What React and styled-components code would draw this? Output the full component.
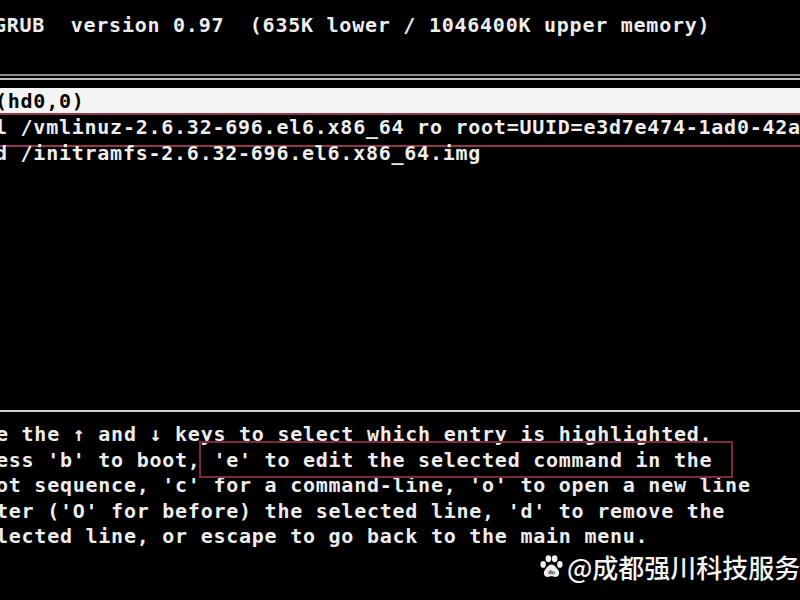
import React from 'react'
import styled, { createGlobalStyle } from 'styled-components'

const GlobalStyle = createGlobalStyle`
    html, body {
        margin: 0;
        padding: 0;
        background: #000;
        overflow: hidden;
    }
`

const Screen = styled.div`
    width: 800px;
    height: 600px;
    background: #000;
    color: #ededed;
    font-family: "DejaVu Sans Mono", "Liberation Mono", monospace;
    font-weight: bold;
    font-size: 20px;
    letter-spacing: 0.75px;
    overflow: hidden;
    display: flex;
    flex-direction: column;
    position: relative;
`

const Header = styled.div`
    padding-top: 12px;
    margin-left: -6px;
    line-height: 26px;
    height: 26px;
    white-space: pre;
`

const Rule = styled.div`
    height: 2px;
    flex-shrink: 0;
    margin-top: ${p => p.$gap}px;
    background: ${p => p.$tone};
`

const Menu = styled.div`
    margin-top: 8px;
    height: 322px;
    display: flex;
    flex-direction: column;
`

const Row = styled.div`
    position: relative;
    height: 26px;
    line-height: 26px;
    white-space: pre;
    background: ${p => (p.$selected ? '#f4f4f4' : 'transparent')};
    color: ${p => (p.$selected ? '#050505' : 'inherit')};

    span {
        display: block;
        margin-left: -5px;
    }

    ${p => p.$marked && `
        &::after {
            content: '';
            position: absolute;
            left: 0;
            right: 0;
            top: -1px;
            height: 30px;
            border-top: 2px solid #94384a;
            border-bottom: 2px solid #94384a;
            pointer-events: none;
        }
    `}
`

const Help = styled.div`
    padding-top: 10px;
    margin-left: -4px;
    line-height: 25.5px;
    white-space: pre;
`

const Mark = styled.span`
    outline: 2px solid #7c2b3b;
    padding: 5px 6px 4px 0;
`

const Watermark = styled.div`
    position: absolute;
    left: 539px;
    top: 548px;
    display: flex;
    align-items: center;
    gap: 3px;
    font-family: "Noto Sans CJK SC", "Noto Sans", sans-serif;
    font-weight: 500;
    font-size: 26px;
    letter-spacing: 0;
    color: #f2f2f2;
    text-shadow: 0 0 2px rgba(0, 0, 0, 0.8);
    white-space: nowrap;
`

function Paw() {
    return (
        <svg width="25" height="25" viewBox="0 0 24 24">
            <ellipse cx="4" cy="10" rx="2.6" ry="3.2" fill="#f0f0f0" />
            <ellipse cx="9" cy="4.5" rx="2.7" ry="3.3" fill="#f0f0f0" />
            <ellipse cx="15" cy="4.5" rx="2.7" ry="3.3" fill="#f0f0f0" />
            <ellipse cx="20" cy="10" rx="2.6" ry="3.2" fill="#f0f0f0" />
            <path d="M12 10c-3 0-4.5 3-6.5 5.5C3.8 17.6 4.5 22 8.5 22c1.5 0 2.300-.6 3.5-.6s2 .6 3.5.6c4 0 4.7-4.4 3-6.5C16.5 13 15 10 12 10z" fill="#f0f0f0" />
            <text x="12" y="19.5" textAnchor="middle" fontSize="5" fontFamily="DejaVu Sans" fill="#222">du</text>
        </svg>
    )
}

export default function App() {
    return (
        <Screen>
            <GlobalStyle />
            <Header>GRUB  version 0.97  (635K lower / 1046400K upper memory)</Header>
            <Rule $gap={36} $tone="#8c8c8c" />
            <Rule $gap={2} $tone="#bdbdbd" />
            <Menu>
                <Row $selected><span>(hd0,0)</span></Row>
                <Row $marked><span>l /vmlinuz-2.6.32-696.el6.x86_64 ro root=UUID=e3d7e474-1ad0-42a</span></Row>
                <Row><span>d /initramfs-2.6.32-696.el6.x86_64.img</span></Row>
            </Menu>
            <Rule $gap={0} $tone="#cfcfcf" />
            <Help>
                <div>e the ↑ and ↓ keys to select which entry is highlighted.</div>
                <div>ess 'b' to boot,<Mark> 'e' to edit the selected command in the </Mark></div>
                <div>ot sequence, 'c' for a command-line, 'o' to open a new line</div>
                <div>ter ('O' for before) the selected line, 'd' to remove the</div>
                <div>lected line, or escape to go back to the main menu.</div>
            </Help>
            <Watermark>
                <Paw />
                <span>@成都强川科技服务</span>
            </Watermark>
        </Screen>
    )
}
